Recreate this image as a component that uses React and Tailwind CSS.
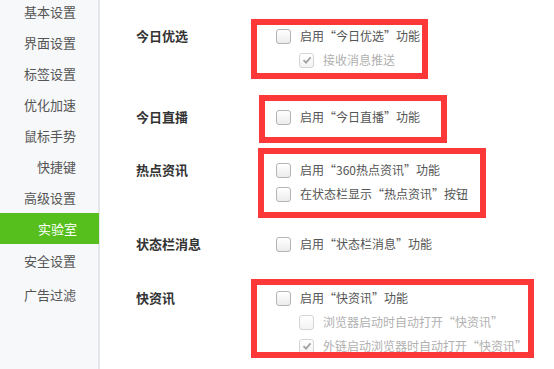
const menu = ["基本设置", "界面设置", "标签设置", "优化加速", "鼠标手势", "快捷键", "高级设置", "实验室", "安全设置", "广告过滤"];

const font = { fontFamily: '"Noto Sans CJK SC", "Liberation Sans", sans-serif' };

function Box({ checked, disabled }) {
  return (
    <span
      className={
        disabled
          ? "w-[15px] h-[15px] rounded-[3px] border border-[#d4d4d4] bg-gradient-to-b from-white to-[#f3f3f3] flex items-center justify-center shrink-0"
          : "w-[15px] h-[15px] rounded-[3px] border border-[#b4b4b4] bg-gradient-to-b from-white to-[#ececec] flex items-center justify-center shrink-0"
      }
    >
      {checked && (
        <svg width="10" height="10" viewBox="0 0 10 10">
          <path d="M1.5 5.2 L4 7.6 L8.6 2.4" fill="none" stroke="#a3a3a3" strokeWidth="1.8" />
        </svg>
      )}
    </span>
  );
}

function Option({ text, sub, checked, disabled }) {
  return (
    <div className={sub ? "h-[24px] flex items-center gap-[9px] pl-[23px]" : "h-[24px] flex items-center gap-[9px]"}>
      <Box checked={checked} disabled={disabled} />
      <span className={disabled ? "text-[12px] text-[#b0b0b0] whitespace-nowrap" : "text-[12px] text-[#555] whitespace-nowrap"}>
        {text}
      </span>
    </div>
  );
}

function Section({ label, className, children, mark }) {
  return (
    <div className={`flex ${className}`}>
      <div className="w-[140px] h-[24px] flex items-center text-[13px] font-bold text-[#333]">{label}</div>
      <div className="relative flex flex-col">
        {children}
        {mark}
      </div>
    </div>
  );
}

export default function App() {
  return (
    <div className="flex h-screen w-full bg-white overflow-hidden" style={font}>
      <div className="w-[100px] border-r-2 border-[#e4e6e9] bg-[#f7f8fa] flex flex-col -mt-[4px]">
        {menu.map((m, i) => (
          <div
            key={m}
            className={
              m === "实验室"
                ? "h-[31px] shrink-0 flex items-center justify-end pr-[22px] text-[13px] text-white bg-[#56bf1d] -mr-[1px]"
                : i > 7
                ? "h-[34px] shrink-0 flex items-center justify-end pr-[22px] text-[13px] text-[#555]"
                : "h-[31px] shrink-0 flex items-center justify-end pr-[22px] text-[13px] text-[#555]"
            }
          >
            {m}
          </div>
        ))}
      </div>

      <div className="flex-1 pl-[36px] flex flex-col">
        <Section
          label="今日优选"
          className="mt-[24px]"
          mark={<div className="absolute left-[-25px] top-[-5px] w-[177px] h-[60px] border-[6px] border-[#fd3838]" />}
        >
          <Option text="启用“今日优选”功能" />
          <Option text="接收消息推送" sub checked disabled />
        </Section>

        <Section
          label="今日直播"
          className="mt-[33px]"
          mark={<div className="absolute left-[-17px] top-[-10px] w-[188px] h-[48px] border-[6px] border-[#fd3838]" />}
        >
          <Option text="启用“今日直播”功能" />
        </Section>

        <Section
          label="热点资讯"
          className="mt-[29px]"
          mark={<div className="absolute left-[-18px] top-[-10px] w-[228px] h-[70px] border-[6px] border-[#fd3838]" />}
        >
          <Option text="启用“360热点资讯”功能" />
          <Option text="在状态栏显示“热点资讯”按钮" />
        </Section>

        <Section label="状态栏消息" className="mt-[26px]">
          <Option text="启用“状态栏消息”功能" />
        </Section>

        <Section
          label="快资讯"
          className="mt-[30px]"
          mark={<div className="absolute left-[-25px] top-[-7px] w-[283px] h-[79px] border-[6px] border-[#fd3838]" />}
        >
          <Option text="启用“快资讯”功能" />
          <Option text="浏览器启动时自动打开“快资讯”" sub disabled />
          <Option text="外链启动浏览器时自动打开“快资讯”" sub checked disabled />
        </Section>
      </div>
    </div>
  );
}
